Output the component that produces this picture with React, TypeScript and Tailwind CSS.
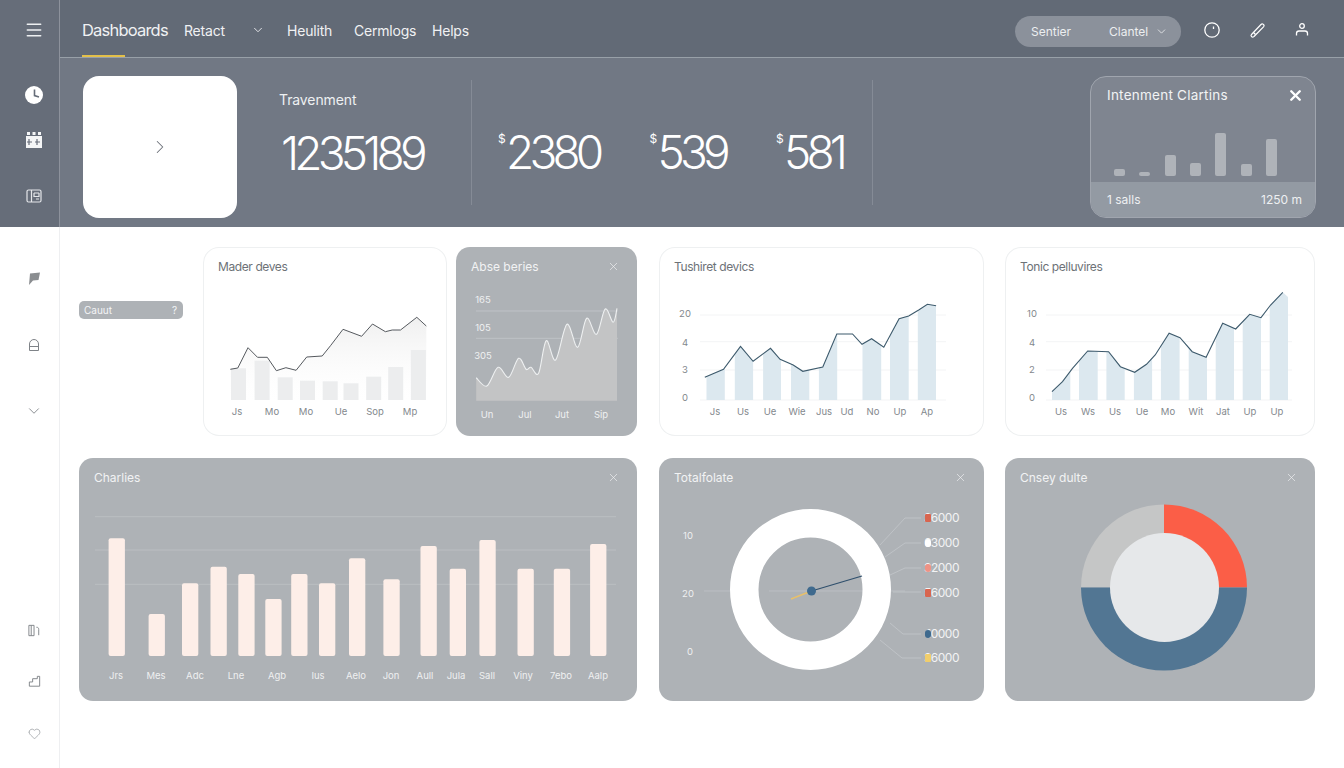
import React from 'react';
import { ChevronDown, ChevronRight, Heart, Menu, X } from 'lucide-react';

type Pt = [number, number];

const lineOf = (pts: Pt[]): string => pts.map((p) => p.join(',')).join(' ');

// catmull-rom, only the wave chart needs it
const smooth = (pts: Pt[]): string => {
  let d = `M${pts[0][0]},${pts[0][1]}`;
  for (let i = 0; i < pts.length - 1; i++) {
    const p0 = pts[i - 1] || pts[i];
    const p1 = pts[i];
    const p2 = pts[i + 1];
    const p3 = pts[i + 2] || p2;
    const c1x = p1[0] + (p2[0] - p0[0]) / 6;
    const c1y = p1[1] + (p2[1] - p0[1]) / 6;
    const c2x = p2[0] - (p3[0] - p1[0]) / 6;
    const c2y = p2[1] - (p3[1] - p1[1]) / 6;
    d += ` C${c1x},${c1y} ${c2x},${c2y} ${p2[0]},${p2[1]}`;
  }
  return d;
};

const masterLine: Pt[] = [
  [230.3, 369.3], [237.8, 368], [248, 347.7], [257.5, 357.3], [267.3, 357.3], [276.4, 370.7], [285.9, 367.7],
  [296.1, 370.3], [306.7, 357], [322.2, 356], [330.5, 345.7], [343, 329.3], [361.6, 336.3], [372.5, 324],
  [385.4, 331.7], [392.2, 330], [400.5, 330], [416.8, 317.3], [426.3, 326],
];
const masterBars: Pt[] = [
  [231, 368.3], [254.6, 360.7], [277.7, 377.3], [300, 380.7], [322.7, 381.3], [343.5, 383.3], [366.2, 376.7],
  [388.2, 367], [410.9, 350],
];
const waveLine: Pt[] = [
  [476.2, 377.7], [486.8, 386], [498.1, 367.3], [508.7, 377.3], [518.6, 358.3], [526.1, 369.3], [531, 367.3],
  [538.6, 373.3], [546.2, 340.7], [555.6, 360], [567, 324.3], [577.6, 347.3], [586.7, 318.3], [596.5, 334.3],
  [605.2, 309], [613.2, 322.3], [617, 308.3],
];
const deviceLine: Pt[] = [
  [704.8, 377.3], [723.5, 369.3], [740.5, 346.3], [753.1, 361.3], [770.5, 348.3], [780.1, 359.3], [793.2, 365],
  [802.8, 371.3], [822.8, 367], [836.8, 334], [852.5, 334], [862, 344.3], [871.6, 338.7], [883.8, 347.3],
  [899.1, 318.7], [908.7, 316], [918.7, 310], [927.4, 304.3], [936.1, 305.7],
];
const deviceBars: [number, number][] = [
  [706.5, 18.3], [734.8, 18.3], [763.1, 17.9], [791, 18.3], [818.9, 18.3], [862.5, 18.7], [890, 18.7], [917.8, 18.3],
];
const tonicLine: Pt[] = [
  [1052, 391.7], [1062.5, 381.7], [1072.5, 368.3], [1087.7, 351], [1108.6, 351.7], [1120.4, 366.7], [1134.7, 372.3],
  [1146.5, 364.3], [1155.2, 355], [1169.1, 333.3], [1180, 337.7], [1192.2, 351.7], [1206.1, 357.3], [1222.7, 323.3],
  [1235.7, 329], [1249.7, 314.3], [1261, 317.7], [1270.6, 305], [1282.8, 292.3],
];
const tonicBars: [number, number][] = [
  [1052, 18.3], [1079, 18.7], [1106.4, 18.3], [1133.9, 18.2], [1160.9, 18.7], [1188.7, 18.3], [1215.7, 18.3],
  [1242.7, 18.3], [1269.7, 18.3],
];
const chartBars: Pt[] = [
  [108.6, 538.3], [148.6, 614], [182, 583.3], [210.5, 566.7], [238.3, 574], [265.3, 599], [291.2, 574], [319, 583.3],
  [349, 558.3], [383.4, 579.3], [420.5, 546], [449.7, 568.7], [479.4, 540], [517.5, 568.7], [553.8, 568.7], [590.1, 544],
];
const chartLabels: [string, number][] = [
  ['Jrs', 116], ['Mes', 156], ['Adc', 195], ['Lne', 236], ['Agb', 277], ['Ius', 318], ['Aelo', 356], ['Jon', 391],
  ['Aull', 425], ['Jula', 456], ['Sall', 487], ['Viny', 523], ['7ebo', 561], ['Aalp', 598],
];
const legend: { y: number; color: string; label: string; path: string; round?: boolean }[] = [
  { y: 518, color: '#d8654f', label: '36000', path: '880,545 905,518 921,518' },
  { y: 543, color: '#ffffff', label: '63000', path: '885,557 905,543 921,543', round: true },
  { y: 568, color: '#ee9285', label: '32000', path: '890,575 905,568 921,568', round: true },
  { y: 593, color: '#d8654f', label: '56000', path: '893,592 921,592' },
  { y: 634, color: '#3f6a8e', label: '10000', path: '890,623 903,634 921,634', round: true },
  { y: 658, color: '#f0cd6b', label: '36000', path: '880,640 902,658 921,658' },
];
const miniBars = ['h-[7px]', 'h-[4px]', 'h-[21px]', 'h-[13px]', 'h-[43px]', 'h-[12px]', 'h-[37px]'];

const Card: React.FC<{ title: string; dark?: boolean; className: string; children: React.ReactNode }> = ({
  title,
  dark,
  className,
  children,
}) => (
  <div
    className={`${className} flex flex-col overflow-hidden ${
      dark ? 'rounded-[14px] bg-[#aeb2b6]' : 'rounded-[16px] bg-white ring-1 ring-inset ring-[#eef0f1]'
    }`}
  >
    <div
      className={`flex h-[40px] shrink-0 items-center justify-between pb-[1px] pl-[15px] pr-[17px] ${
        dark ? 'text-[#f2f3f4]' : 'tracking-[-0.4px] text-[#6d7277]'
      }`}
    >
      <span className="text-[12px] leading-none">{title}</span>
      {dark && <X size={13} strokeWidth={1.2} />}
    </div>
    {children}
  </div>
);

const AxisText: React.FC<{ x: number; y: number; children: string; light?: boolean }> = ({ x, y, children, light }) => (
  <text x={x} y={y} textAnchor="middle" className={`text-[9.5px] ${light ? 'fill-[#eef0f1]' : 'fill-[#83888d]'}`}>
    {children}
  </text>
);

const Stat: React.FC<{ value: string; className: string }> = ({ value, className }) => (
  <div className={`${className} flex items-start`}>
    <span className="mt-[4px] w-[8px] text-[12px] leading-none text-white">$</span>
    <span className="text-[46px] font-light leading-none tracking-[-4.8px] text-white">{value}</span>
  </div>
);

const App: React.FC = () => {
  return (
    <div className="flex h-[768px] w-[1344px] overflow-hidden bg-white font-['Inter',sans-serif]">
      <aside className="flex w-[60px] shrink-0 flex-col">
        <div className="flex h-[227px] flex-col items-center border-r border-[#8d929c] bg-[#666d79] pl-[9px] text-white">
          <Menu size={20} strokeWidth={1.8} className="mt-[20px] text-[#eef0f2]" />
          <svg viewBox="0 0 18 18" className="mt-[46px] h-[18px] w-[18px]">
            <circle cx="9" cy="9" r="9" fill="#fff" />
            <path d="M9.500 3.500V9.600L14 11" fill="none" stroke="#666d79" strokeWidth="1.600" />
          </svg>
          <svg viewBox="0 0 18 18" className="mt-[27px] h-[18px] w-[18px]">
            <path d="M1 5h16v12H1z" fill="#f4f5f6" />
            <path d="M2 1h3v3H2zM7.500 1h3v3h-3zM13 1h3v3h-3z" fill="#f4f5f6" />
            <path d="M4 8v6M2 11h5M12 8v6M10 11h5" stroke="#666d79" strokeWidth="1.200" />
          </svg>
          <svg viewBox="0 0 16 16" className="mt-[39px] h-[16px] w-[16px]" fill="none" stroke="#e4e6e9" strokeWidth="1.200">
            <rect x="1" y="2" width="14" height="12" rx="1.500" />
            <path d="M5.500 2v12M8 5h5M8 5v3.500h5V5M10 11h3" />
          </svg>
        </div>
        <div className="flex flex-1 flex-col items-center border-r border-[#eeeff1] pl-[9px] text-[#7f8388]">
          <svg viewBox="0 0 14 14" className="mt-[45px] h-[14px] w-[14px]">
            <path d="M3 1.500L13 0.500L11.500 8L6 8.500L2 13Z" fill="#8a8d90" />
          </svg>
          <svg viewBox="0 0 14 14" className="mt-[52px] h-[14px] w-[14px]" fill="none" stroke="currentColor" strokeWidth="1">
            <path d="M2.500 12.500V6a4.500 4.500 0 0 1 9 0v6.500zM2.500 8.500h9" />
          </svg>
          <ChevronDown size={18} strokeWidth={1.200} className="mt-[50px]" />
          <svg viewBox="0 0 16 16" className="mt-[203px] h-[15px] w-[15px]" fill="none" stroke="currentColor" strokeWidth="1">
            <path d="M2 2.500h5.500v11H2zM4.500 2.500v11M10 4.500c2 0 2.500 1 2.500 2.500v6" />
          </svg>
          <svg viewBox="0 0 16 16" className="mt-[36px] h-[15px] w-[15px]" fill="none" stroke="currentColor" strokeWidth="1">
            <path d="M6 5h5V2.500h2.500v10.500H2.500v-4.500H6z" />
          </svg>
          <Heart size={13} strokeWidth={1.100} className="mt-[38px]" />
        </div>
      </aside>

      <main className="flex min-w-0 flex-1 flex-col">
        <header className="flex h-[58px] items-center border-b border-[#98a0a8] bg-[#626a76] pt-[3px] text-[#f0f1f3]">
          <div className="relative flex h-full w-[124px] items-center pl-[22px] text-[16.5px] tracking-[-0.8px]">
            Dashboards
            <span className="absolute bottom-0 left-[22px] h-[2px] w-[43px] bg-[#e3c04a]" />
          </div>
          <nav className="flex items-center text-[14px] tracking-[-0.2px]">
            <span className="w-[67px]">Retact</span>
            <ChevronDown size={14} strokeWidth={1.500} className="mr-[22px]" />
            <span className="w-[67px]">Heulith</span>
            <span className="w-[78px]">Cermlogs</span>
            <span>Helps</span>
          </nav>
          <div className="ml-auto mt-[3px] flex h-[31px] w-[166px] items-center rounded-full bg-[#8b919b] pl-[16px] text-[12px] text-[#eceef0]">
            <span className="w-[78px]">Sentier</span>
            <span className="w-[46px]">Clantel</span>
            <ChevronDown size={13} strokeWidth={1.500} />
          </div>
          <div className="ml-[22px] mr-[34px] flex items-center text-white">
            <svg viewBox="0 0 18 18" className="h-[18px] w-[18px]" fill="none" stroke="currentColor" strokeWidth="1.300">
              <circle cx="9" cy="9" r="7.200" />
              <path d="M10.500 5.500V8" />
            </svg>
            <svg viewBox="0 0 16 16" className="ml-[29px] h-[16px] w-[16px]" fill="none" stroke="currentColor" strokeWidth="1.200">
              <path d="M1.500 12.500L11 2.500a1.600 1.600 0 0 1 2.500 2.300L4 14.500a1.600 1.600 0 0 1-2.500-2z" />
              <path d="M3.500 10.500L5.500 12.500" />
            </svg>
            <svg viewBox="0 0 16 16" className="ml-[28px] h-[16px] w-[16px]" fill="none" stroke="currentColor" strokeWidth="1.300">
              <circle cx="8" cy="4" r="2.300" />
              <path d="M2.500 13.500V11.500Q2.500 9 5 9H11Q13.500 9 13.500 11.500V13.500" />
            </svg>
          </div>
        </header>

        <section className="flex h-[169px] bg-[#717884] pl-[23px] text-white">
          <div className="mt-[18px] flex h-[142px] w-[154px] shrink-0 items-center justify-center rounded-[16px] bg-white text-[#6b7078]">
            <ChevronRight size={22} strokeWidth={1.100} />
          </div>
          <div className="my-[22px] w-[235px] shrink-0 border-r border-[#858b96] pl-[42px]">
            <div className="mt-[13px] text-[14px] leading-none tracking-[-0.1px] text-[#eef0f2]">Travenment</div>
            <div className="ml-[2px] mt-[23px] text-[46px] font-light leading-none tracking-[-4.8px]">1235189</div>
          </div>
          <div className="my-[22px] flex w-[401px] shrink-0 border-r border-[#858b96] pt-[49px]">
            <Stat value="2380" className="ml-[26px]" />
            <Stat value="539" className="ml-[50px]" />
            <Stat value="581" className="ml-[50px]" />
          </div>
          <div className="ml-auto mr-[28px] mt-[18px] flex h-[142px] w-[226px] flex-col overflow-hidden rounded-[16px] border border-[#a0a5ae] bg-[#7f8590]">
            <div className="flex items-center justify-between pl-[16px] pr-[11px] pt-[10px] text-[13.5px] leading-none tracking-[0.25px] text-[#f2f3f4]">
              <span>Intenment Clartins</span>
              <X size={17} strokeWidth={3.400} className="text-white" />
            </div>
            <div className="flex flex-1 items-end justify-between pb-[6px] pl-[23px] pr-[38px]">
              {miniBars.map((h, i) => (
                <span key={i} className={`${h} w-[11px] rounded-[2px] bg-[#afb3b9]`} />
              ))}
            </div>
            <div className="flex h-[35px] items-center justify-between bg-[#939aa3] px-[16px] pr-[13px] text-[12px] text-[#eef0f2]">
              <span>1 salls</span>
              <span>1250 m</span>
            </div>
          </div>
        </section>

        <div className="flex flex-col gap-[22px] pl-[19px] pt-[20px]">
          <div className="flex h-[189px] items-start">
            <div className="mr-[20px] mt-[54px] flex h-[18px] w-[104px] items-center justify-between rounded-[5px] bg-[#aeb2b6] px-[5px] pr-[6px] text-[10px] text-[#f4f5f6]">
              <span>Cauut</span>
              <span>?</span>
            </div>

            <Card title="Mader deves" className="h-[189px] w-[244px]">
              <svg viewBox="203 287 244 149" className="block h-[149px] w-full">
                <defs>
                  <linearGradient id="masterFade" x1="0" y1="0" x2="0" y2="1">
                    <stop offset="0" stopColor="#efefef" />
                    <stop offset="1" stopColor="#ffffff" stopOpacity="0.2" />
                  </linearGradient>
                </defs>
                <polygon points={`230.300,400 ${lineOf(masterLine)} 426.300,400`} fill="url(#masterFade)" />
                {masterBars.map(([x, y]) => (
                  <rect key={x} x={x} y={y} width={15} height={400 - y} fill="#ecedee" />
                ))}
                <polyline points={lineOf(masterLine)} fill="none" stroke="#55595e" strokeWidth="1" />
                {([['Js', 237], ['Mo', 272], ['Mo', 306], ['Ue', 341], ['Sop', 375], ['Mp', 410]] as [string, number][]).map(([t, x]) => (
                  <AxisText key={x} x={x} y={415}>{t}</AxisText>
                ))}
              </svg>
            </Card>

            <Card title="Abse beries" dark className="ml-[9px] h-[189px] w-[181px]">
              <svg viewBox="456 287 181 149" className="block h-[149px] w-full">
                <path d="M476 311H618M476 338.300H618" stroke="#c4c7cb" strokeWidth="0.800" />
                <path d={`${smooth(waveLine)} L617,400.700 L476.200,400.700 Z`} fill="#c3c4c5" />
                <path d={smooth(waveLine)} fill="none" stroke="#eef0f1" strokeWidth="1.100" />
                <AxisText x={483} y={303} light>165</AxisText>
                <AxisText x={483} y={331} light>105</AxisText>
                <AxisText x={483} y={359} light>305</AxisText>
                {([['Un', 487], ['Jul', 525], ['Jut', 562], ['Sip', 601]] as [string, number][]).map(([t, x]) => (
                  <AxisText key={x} x={x} y={418} light>{t}</AxisText>
                ))}
              </svg>
            </Card>

            <Card title="Tushiret devics" className="ml-[22px] h-[189px] w-[325px]">
              <svg viewBox="659 287 325 149" className="block h-[149px] w-full">
                <defs>
                  <clipPath id="deviceClip">
                    <polygon points={`704.800,400 ${lineOf(deviceLine)} 936.100,400`} />
                  </clipPath>
                </defs>
                <path d="M700 315H946M700 341.700H946M700 370H946M700 400H946" stroke="#f3f4f5" strokeWidth="1" />
                <g clipPath="url(#deviceClip)">
                  {deviceBars.map(([x, w]) => (
                    <rect key={x} x={x} y={300} width={w} height={100} fill="#dce8ef" />
                  ))}
                </g>
                <polyline points={lineOf(deviceLine)} fill="none" stroke="#3d5a6c" strokeWidth="1.100" />
                {([['20', 317], ['4', 346], ['3', 373], ['0', 401]] as [string, number][]).map(([t, y]) => (
                  <AxisText key={y} x={685} y={y}>{t}</AxisText>
                ))}
                {([['Js', 715], ['Us', 743], ['Ue', 770], ['Wie', 797], ['Jus', 824], ['Ud', 847], ['No', 873], ['Up', 900], ['Ap', 927]] as [string, number][]).map(([t, x]) => (
                  <AxisText key={x} x={x} y={415}>{t}</AxisText>
                ))}
              </svg>
            </Card>

            <Card title="Tonic pelluvires" className="ml-[21px] h-[189px] w-[310px]">
              <svg viewBox="1005 287 310 149" className="block h-[149px] w-full">
                <defs>
                  <clipPath id="tonicClip">
                    <polygon points={`1052,400 ${lineOf(tonicLine)} 1288,297 1288,400`} />
                  </clipPath>
                </defs>
                <path d="M1046 315H1292M1046 341.700H1292M1046 370H1292M1046 400H1292" stroke="#f3f4f5" strokeWidth="1" />
                <g clipPath="url(#tonicClip)">
                  {tonicBars.map(([x, w]) => (
                    <rect key={x} x={x} y={290} width={w} height={110} fill="#dce8ef" />
                  ))}
                </g>
                <polyline points={lineOf(tonicLine)} fill="none" stroke="#3d5a6c" strokeWidth="1.100" />
                {([['10', 317], ['4', 346], ['2', 373], ['0', 401]] as [string, number][]).map(([t, y]) => (
                  <AxisText key={y} x={1032} y={y}>{t}</AxisText>
                ))}
                {([['Us', 1061], ['Ws', 1088], ['Us', 1115], ['Ue', 1142], ['Mo', 1168], ['Wit', 1196], ['Jat', 1223], ['Up', 1250], ['Up', 1277]] as [string, number][]).map(([t, x]) => (
                  <AxisText key={x} x={x} y={415}>{t}</AxisText>
                ))}
              </svg>
            </Card>
          </div>

          <div className="flex h-[243px]">
            <Card title="Charlies" dark className="h-[243px] w-[558px]">
              <svg viewBox="79 498 558 203" className="block h-[203px] w-full">
                <path d="M95 516.700H616M95 550H616M95 584.300H616" stroke="#bbbec2" strokeWidth="1" />
                {chartBars.map(([x, y]) => (
                  <rect key={x} x={x} y={y} width={16.300} height={656 - y} rx={2} fill="#fdeee8" />
                ))}
                {chartLabels.map(([t, x]) => (
                  <AxisText key={x} x={x} y={679} light>{t}</AxisText>
                ))}
              </svg>
            </Card>

            <Card title="Totalfolate" dark className="ml-[22px] h-[243px] w-[325px]">
              <svg viewBox="659 498 325 203" className="block h-[203px] w-full">
                <path d="M704 591H730M769 591H863M891 591H905" stroke="#bfc2c6" strokeWidth="0.800" />
                <circle cx={810.500} cy={589.500} r={66.250} fill="none" stroke="#fff" strokeWidth={28.500} />
                {legend.map((l) => (
                  <polyline key={l.y} points={l.path} fill="none" stroke="#c3c6ca" strokeWidth="0.800" />
                ))}
                <path d="M811.500 591L791 599" stroke="#e8c06a" strokeWidth="1.600" />
                <path d="M811.500 591L862 576" stroke="#2f4f6c" strokeWidth="1.200" />
                <circle cx={811.500} cy={591} r={4.500} fill="#3f6a8e" />
                <AxisText x={688} y={539} light>10</AxisText>
                <AxisText x={688} y={597} light>20</AxisText>
                <AxisText x={690} y={655} light>0</AxisText>
                {legend.map((l) => (
                  <g key={l.y}>
                    <text x={959} y={l.y + 4} textAnchor="end" className="fill-[#f2f3f4] text-[12px] tracking-[-0.5px]">
                      {l.label}
                    </text>
                    <rect x={925} y={l.y - 4} width={6} height={8} rx={l.round ? 3 : 1} fill={l.color} />
                  </g>
                ))}
              </svg>
            </Card>

            <Card title="Cnsey dulte" dark className="ml-[21px] h-[243px] w-[310px]">
              <svg viewBox="1005 498 310 203" className="block h-[203px] w-full">
                <path d="M1164 504.500A83 83 0 0 1 1247 587.500H1164Z" fill="#fb5e47" />
                <path d="M1164 504.500A83 83 0 0 0 1081 587.500H1164Z" fill="#c5c6c6" />
                <path d="M1081 587.500A83 83 0 0 0 1247 587.500Z" fill="#527693" />
                <circle cx={1164.500} cy={587.500} r={54.500} fill="#e6e8ea" />
              </svg>
            </Card>
          </div>
        </div>
      </main>
    </div>
  );
};

export default App;
